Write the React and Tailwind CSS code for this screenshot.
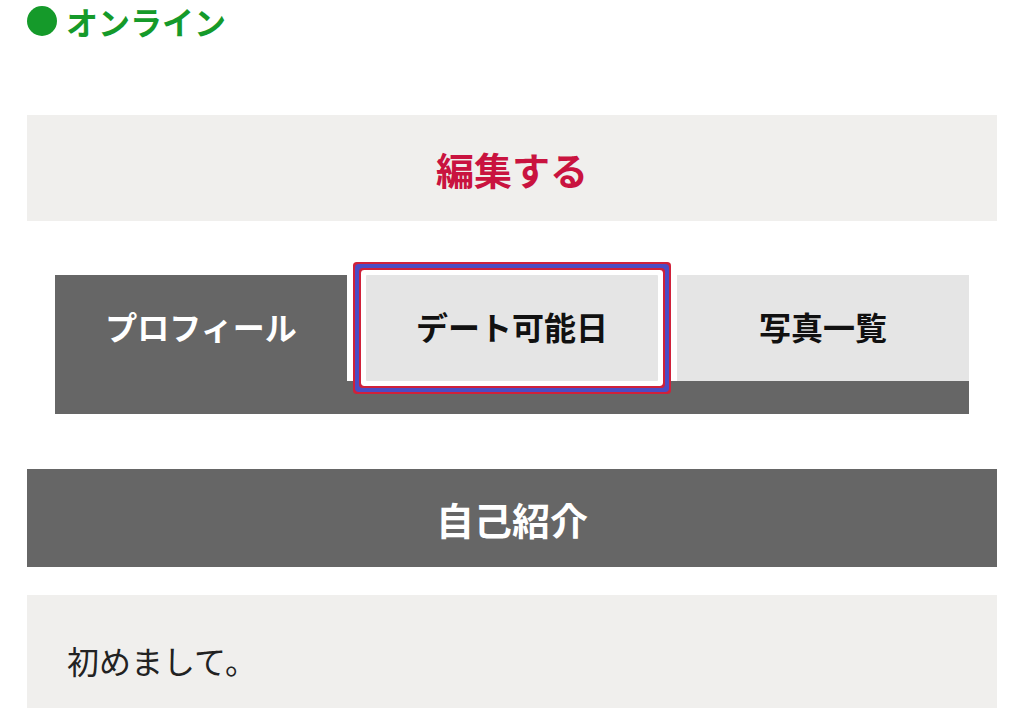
export default function App() {
  const tabs = [
    { label: "プロフィール", active: false, current: true },
    { label: "デート可能日", active: true, current: false },
    { label: "写真一覧", active: false, current: false },
  ];

  return (
    <div className="w-[1024px] h-[708px] overflow-hidden bg-white font-['Noto_Sans_CJK_JP','Noto_Sans',sans-serif]">
      {/* status */}
      <div className="flex items-center h-[42px] pl-[27px] gap-[9px]">
        <span className="w-[30px] h-[30px] rounded-full bg-[#159a2a]" />
        <span className="text-[32px] leading-[42px] font-bold text-[#159a2a]">オンライン</span>
      </div>

      <button className="mx-[27px] mt-[73px] w-[970px] h-[106px] bg-[#f0efed] flex items-center justify-center text-[38px] font-bold text-[#c9133f]">
        編集する
      </button>

      {/* tabs */}
      <div className="mx-[55px] mt-[54px]">
        <div className="flex gap-[19px]">
          {tabs.map((t) => (
            <div
              key={t.label}
              className={
                "flex-1 h-[106px] flex items-center justify-center pb-[4px] text-[32px] font-bold " +
                (t.current
                  ? "bg-[#666666] text-white"
                  : "bg-[#e5e5e5] text-[#111]") +
                (t.active
                  ? " relative z-10 rounded-[1px] shadow-[0_0_0_5px_#fff,0_0_0_7px_#d0213a,0_0_0_11px_#4b4cc4,0_0_0_13px_#d0213a]"
                  : "")
              }
            >
              {t.label}
            </div>
          ))}
        </div>
        <div className="h-[33px] bg-[#666666]" />
      </div>

      <div className="mx-[27px] mt-[55px] h-[98px] bg-[#666666] flex items-center justify-center text-[38px] font-bold text-white">
        自己紹介
      </div>

      <div className="mx-[27px] mt-[28px] bg-[#f0efed] pt-[41px] pb-[40px] pl-[40px]">
        <p className="text-[32px] leading-[48px] text-[#222]">初めまして。</p>
      </div>
    </div>
  );
}
